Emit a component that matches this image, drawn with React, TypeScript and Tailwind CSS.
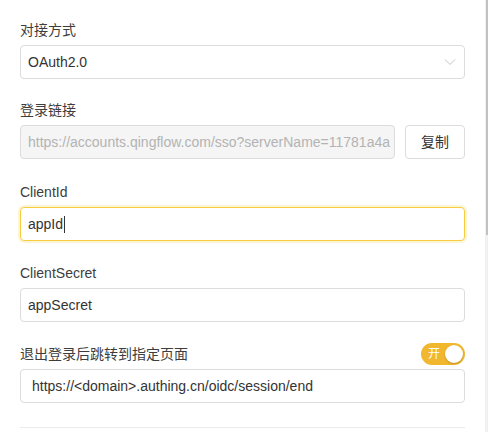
import React from 'react';

const FONT = { fontFamily: '"Liberation Sans", "Noto Sans CJK SC", Arial, sans-serif' };

const Label: React.FC<{ children: React.ReactNode }> = ({ children }) => (
  <div className="h-[20px] leading-[20px] text-[14px] text-[#3d3d3d]">{children}</div>
);

export default function App() {
  return (
    <div className="flex h-[432px] w-[488px] overflow-hidden bg-white" style={FONT}>
      <div className="w-[484px] shrink-0 pl-[20px] pr-[19px] pt-[20px]">
        {/* 对接方式 */}
        <Label>对接方式</Label>
        <div className="mt-[5px] flex h-[34px] items-center justify-between rounded-[4px] border border-[#dcdcdc] pl-[7px] pr-[7px] text-[14px] text-[#333]">
          <span>OAuth2.0</span>
          <svg width="12" height="8" viewBox="0 0 12 8" className="mr-[1px]">
            <path d="M1 1.5 L6 6.5 L11 1.5" fill="none" stroke="#c4c4c4" strokeWidth="1" />
          </svg>
        </div>

        {/* 登录链接 */}
        <div className="mt-[21px]">
          <Label>登录链接</Label>
          <div className="mt-[5px] flex gap-[10px]">
            <div className="h-[34px] min-w-0 flex-1 overflow-hidden rounded-[4px] border border-[#dcdcdc] bg-[#f5f5f5] pl-[7px] pr-[2px]">
              <div className="overflow-hidden whitespace-nowrap text-[14px] leading-[32px] text-[#b3b3b3]">
                https://accounts.qingflow.com/sso?serverName=11781a4a
              </div>
            </div>
            <button className="h-[34px] w-[60px] shrink-0 rounded-[4px] border border-[#dcdcdc] bg-white text-[14px] text-[#333]">
              复制
            </button>
          </div>
        </div>

        {/* ClientId */}
        <div className="mt-[23px]">
          <Label>ClientId</Label>
          <div className="mt-[5px] flex h-[34px] items-center rounded-[4px] border border-[#f7cc3f] pl-[7px] text-[14px] text-[#333] shadow-[0_0_0_2px_rgba(250,215,90,0.25)]">
            <span>appId</span>
            <span className="ml-[1px] inline-block h-[17px] w-[1px] bg-[#333]" />
          </div>
        </div>

        {/* ClientSecret */}
        <div className="mt-[22px]">
          <Label>ClientSecret</Label>
          <div className="mt-[5px] flex h-[34px] items-center rounded-[4px] border border-[#dcdcdc] pl-[7px] text-[14px] text-[#333]">
            appSecret
          </div>
        </div>

        {/* 退出登录后跳转 */}
        <div className="mt-[22px]">
          <div className="flex h-[20px] items-center justify-between">
            <Label>退出登录后跳转到指定页面</Label>
            <div className="flex h-[22px] w-[44px] items-center justify-between rounded-full bg-[#f0b72f] pl-[7px] pr-[2px]">
              <span className="text-[12px] leading-none text-white">开</span>
              <span className="h-[18px] w-[18px] rounded-full bg-white shadow-[0_1px_2px_rgba(0,0,0,0.2)]" />
            </div>
          </div>
          <div className="mt-[5px] flex h-[34px] items-center rounded-[4px] border border-[#dcdcdc] pl-[11px] text-[14px] text-[#333]">
            https://&lt;domain&gt;.authing.cn/oidc/session/end
          </div>
        </div>

        <div className="mt-[24px] h-px bg-[#ebebeb]" />
      </div>

      {/* scrollbar */}
      <div className="ml-[1px] w-[3px] bg-[#f1f1f1]">
        <div className="ml-auto h-[235px] w-[2px] bg-[#c1c1c1]" />
      </div>
    </div>
  );
}
